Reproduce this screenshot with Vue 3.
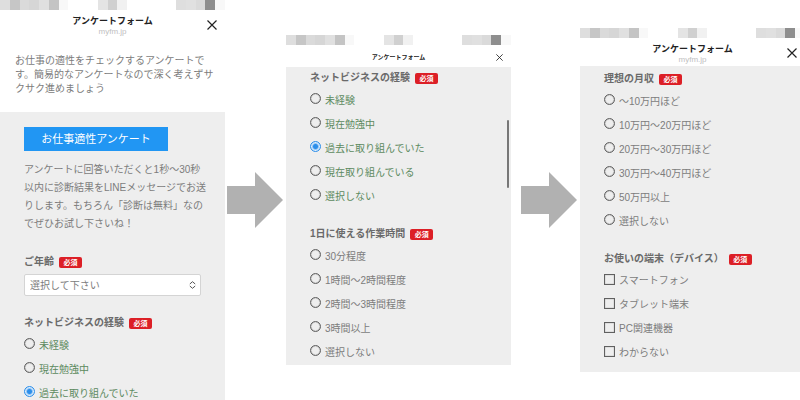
<script setup>
import { ref } from 'vue'

const title = 'アンケートフォーム'
const required = '必須'

const mosaic = [
  '#dedede', '#c6c6c6', '#dadada', '#d6d6d6', '#e0e0e0', '#c4c4c4', '#f8f8f8',
  '', '', '', '#e4e4e4', '#d0d0d0', '#f1f1f1', '', '', '', '', '',
  '#dedede', '#e0e0e0', '#dadada', '#8e8e8e', '#f8f8f8',
]

const screens = ref([
  {
    id: 'start',
    url: 'myfm.jp',
    intro: ['お仕事の適性をチェックするアンケートで', 'す。簡易的なアンケートなので深く考えずサ', 'クサク進めましょう'],
    cta: 'お仕事適性アンケート',
    lead: ['アンケートに回答いただくと1秒〜30秒', '以内に診断結果をLINEメッセージでお送', 'りします。もちろん「診断は無料」なの', 'でぜひお試し下さいね！'],
    select: { label: 'ご年齢', placeholder: '選択して下さい' },
    groups: [
      {
        label: 'ネットビジネスの経験',
        type: 'radio',
        green: true,
        value: '過去に取り組んでいた',
        options: ['未経験', '現在勉強中', '過去に取り組んでいた'],
      },
    ],
  },
  {
    id: 'experience',
    compact: true,
    scrolled: true,
    groups: [
      {
        label: 'ネットビジネスの経験',
        type: 'radio',
        green: true,
        value: '過去に取り組んでいた',
        options: ['未経験', '現在勉強中', '過去に取り組んでいた', '現在取り組んでいる', '選択しない'],
      },
      {
        label: '1日に使える作業時間',
        type: 'radio',
        value: '',
        options: ['30分程度', '1時間〜2時間程度', '2時間〜3時間程度', '3時間以上', '選択しない'],
      },
    ],
  },
  {
    id: 'income',
    url: 'myfm.jp',
    groups: [
      {
        label: '理想の月収',
        type: 'radio',
        value: '',
        options: ['〜10万円ほど', '10万円〜20万円ほど', '20万円〜30万円ほど', '30万円〜40万円ほど', '50万円以上', '選択しない'],
      },
      {
        label: 'お使いの端末（デバイス）',
        type: 'checkbox',
        value: [],
        options: ['スマートフォン', 'タブレット端末', 'PC関連機器', 'わからない'],
      },
    ],
  },
])
</script>

<template>
  <main class="flow">
    <template v-for="(screen, s) in screens" :key="screen.id">
      <div v-if="s > 0" class="step">
        <svg class="arrow" viewBox="0 0 56 56" aria-hidden="true">
          <path d="M0 14H28V0L56 28L28 56V42H0Z" fill="#b1b1b1" />
        </svg>
      </div>

      <section :class="['screen', screen.id]">
        <div class="mosaic" aria-hidden="true">
          <i v-for="(c, i) in mosaic" :key="i" :style="{ background: c }"></i>
        </div>
        <header :class="['bar', { compact: screen.compact }]">
          <div class="names">
            <h1 class="title">{{ title }}</h1>
            <span v-if="screen.url" class="url">{{ screen.url }}</span>
          </div>
          <button type="button" class="close" aria-label="閉じる">
            <svg viewBox="0 0 10 10" aria-hidden="true">
              <path d="M0.5 0.5L9.5 9.5M9.5 0.5L0.5 9.5" stroke="#222" stroke-width="1.2" fill="none" />
            </svg>
          </button>
        </header>

        <p v-if="screen.intro" class="intro">
          <span v-for="line in screen.intro" :key="line">{{ line }}</span>
        </p>

        <form class="body" @submit.prevent>
          <div v-if="screen.cta" class="opening">
            <button type="button" class="cta">{{ screen.cta }}</button>
            <p class="lead">
              <span v-for="line in screen.lead" :key="line">{{ line }}</span>
            </p>
          </div>

          <div v-if="screen.select" class="field">
            <label class="heading" :for="screen.id + '-age'">
              {{ screen.select.label }}<span class="badge">{{ required }}</span>
            </label>
            <div class="picker">
              <select :id="screen.id + '-age'">
                <option>{{ screen.select.placeholder }}</option>
              </select>
              <svg viewBox="0 0 7 8" aria-hidden="true">
                <path d="M0.8 3L3.5 0.7L6.2 3M0.8 5L3.5 7.3L6.2 5" stroke="#555" stroke-width="1" fill="none" />
              </svg>
            </div>
          </div>

          <fieldset v-for="(group, g) in screen.groups" :key="group.label" class="group">
            <legend class="heading">
              {{ group.label }}<span class="badge">{{ required }}</span>
            </legend>
            <label
              v-for="option in group.options"
              :key="option"
              :class="['option', group.type, { green: group.green }]"
            >
              <input
                v-if="group.type === 'radio'"
                v-model="group.value"
                type="radio"
                :name="screen.id + g"
                :value="option"
              />
              <input v-else v-model="group.value" type="checkbox" :name="screen.id + g" :value="option" />
              <span>{{ option }}</span>
            </label>
          </fieldset>
        </form>
        <div v-if="screen.scrolled" class="thumb" aria-hidden="true"></div>
      </section>
    </template>
  </main>
</template>

<style>
body {
  margin: 0;
  background: #fff;
}
</style>

<style scoped>
.flow {
  display: grid;
  grid-template-columns: 28.125% 7.625% 28.125% 8.625% 28.125%;
  grid-template-rows: 100%;
  align-items: center;
  height: 100vh;
  overflow: hidden;
  font-family: "Liberation Sans", "Noto Sans CJK JP", sans-serif;
  font-size: 10px;
  color: #7c7c7c;
}
.screen {
  position: relative;
  background: #fff;
  white-space: nowrap;
}
.start {
  align-self: start;
}
.step {
  display: flex;
  justify-content: flex-end;
  padding-right: 3px;
}
.arrow {
  width: 56px;
  height: 56px;
}
.mosaic {
  display: grid;
  grid-template-columns: repeat(23, 1fr);
  height: 10px;
}
.bar {
  display: grid;
  box-sizing: border-box;
  grid-template-columns: 27px 1fr 27px;
  align-items: center;
  height: 28px;
  padding-top: 2px;
}
.names {
  grid-column: 2;
  display: flex;
  flex-direction: column;
  align-items: center;
}
.title {
  margin: 0;
  font-size: 9px;
  line-height: 12px;
  font-weight: 700;
  color: #222;
}
.url {
  font-size: 8px;
  line-height: 9px;
  color: #c0c0c0;
}
.close {
  width: 10px;
  height: 10px;
  margin: 0 0 0 9px;
  padding: 0;
  border: 0;
  background: none;
}
.close svg {
  display: block;
  width: 100%;
}
.compact {
  height: 22px;
}
.compact .title {
  font-size: 6px;
}
.compact .close {
  width: 7px;
  height: 7px;
  margin: 0 0 0 12px;
}
.intro {
  margin: 0;
  padding: 16px 15px;
  line-height: 14px;
}
.intro span,
.lead span {
  display: block;
}
.body {
  display: flex;
  flex-direction: column;
  gap: 18px;
  padding: 2px 24px;
  background: #eee;
}
.start .body {
  padding-top: 15px;
}
.income .body {
  padding: 4px 24px 8px;
}
.cta {
  display: block;
  width: 144px;
  height: 24px;
  padding: 0;
  border: 0;
  background: #2196f3;
  color: #fff;
  font-family: inherit;
  font-size: 11px;
  line-height: 24px;
}
.lead {
  margin: 10px 0 2px;
  line-height: 18px;
}
.heading {
  display: flex;
  align-items: center;
  gap: 5px;
  height: 18px;
  padding: 0;
  font-weight: 700;
  line-height: 18px;
  color: #6a6a6a;
}
.badge {
  width: 23px;
  border-radius: 2px;
  background: #dc1f26;
  color: #fff;
  font-size: 7px;
  line-height: 11px;
  text-align: center;
}
.picker {
  display: grid;
  align-items: center;
  margin-top: 3px;
}
.picker select {
  grid-area: 1 / 1;
  width: 100%;
  height: 22px;
  padding: 0 5px;
  border: 1px solid #d4d4d4;
  border-radius: 2px;
  background: #fff;
  color: #7c7c7c;
  font-family: inherit;
  font-size: 10px;
  appearance: none;
}
.picker svg {
  grid-area: 1 / 1;
  justify-self: end;
  width: 7px;
  height: 8px;
  margin-right: 5px;
  pointer-events: none;
}
.group {
  min-width: 0;
  margin: 0;
  padding: 0;
  border: 0;
}
.option {
  display: flex;
  box-sizing: border-box;
  align-items: center;
  gap: 4px;
  height: 24px;
  padding-bottom: 2px;
}
.option input {
  flex: none;
  box-sizing: border-box;
  width: 11px;
  height: 11px;
  margin: 0;
  border: 1px solid #606060;
  box-shadow: inset 0 0 1px #606060;
  appearance: none;
}
.radio input {
  border-radius: 50%;
}
.radio span {
  padding-top: 2px;
}
.radio input:checked {
  border-color: #2b8eea;
  box-shadow: inset 0 0 1px #2b8eea;
  background: radial-gradient(circle, #2b8eea 2px, #fff 4px);
}
.checkbox input:checked {
  background: #2b8eea;
}
.green {
  color: #5c8a5e;
}
.thumb {
  position: absolute;
  top: 85px;
  right: 2px;
  width: 2px;
  height: 68px;
  border-radius: 1px;
  background: #777;
}
</style>
